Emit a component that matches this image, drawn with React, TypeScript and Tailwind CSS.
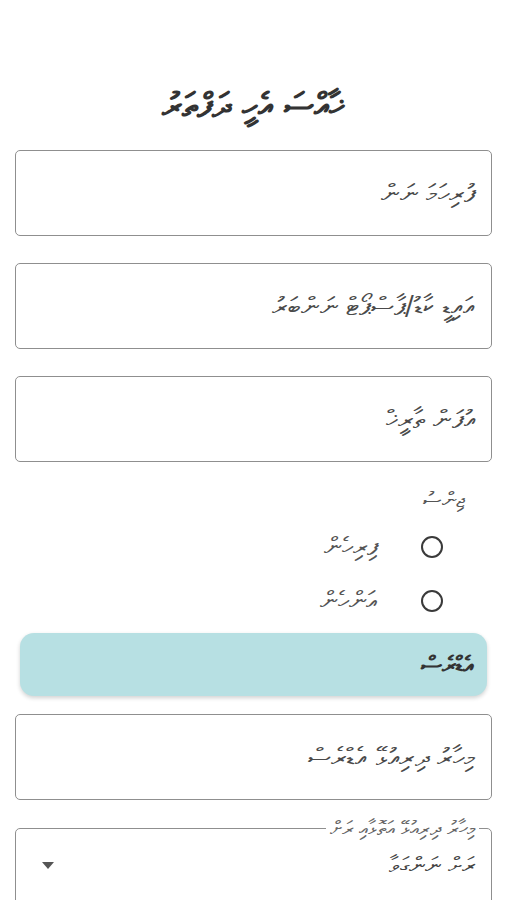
import React from 'react'

const font = { fontFamily: '"DejaVu Sans", "Noto Sans", sans-serif' }

function Field({ label }: { label: string }) {
  return (
    <div className="h-[86px] rounded-[5px] border border-[#8f8f8f] flex items-center px-4">
      <span className="text-[26px] leading-[32px] text-[#4a4a4a]">{label}</span>
    </div>
  )
}

function Radio({ label }: { label: string }) {
  return (
    <label className="flex items-center h-[54px]">
      <span className="mr-[21px] w-[22px] h-[22px] rounded-full border-2 border-[#3a3a3a]" />
      <span className="mr-[44px] text-[25px] leading-[30px] text-[#555]">{label}</span>
    </label>
  )
}

export default function App() {
  return (
    <div dir="rtl" style={font} className="w-[507px] min-h-[900px] bg-white px-[15px] overflow-hidden">
      <h1 className="mt-[85px] mb-[25px] h-[40px] leading-[40px] text-center text-[34px] font-bold text-[#333]">
        ޚާއްސަ އެހީ ދަފްތަރު
      </h1>

      <div className="flex flex-col gap-[27px]">
        <Field label="ފުރިހަމަ ނަން" />
        <Field label="އައިޑީ ކާޑު/ޕާސްޕޯޓް ނަންބަރު" />
        <Field label="އުފަން ތާރީޚް" />
      </div>

      <div className="pt-[23px] pr-[28px]">
        <div className="text-[21px] text-[#555] h-[30px] leading-[30px]">ޖިންސު</div>
        <div className="mt-[5px]">
          <Radio label="ފިރިހެން" />
          <Radio label="އަންހެން" />
        </div>
      </div>

      <div className="mx-[5px] mt-[5px] h-[63px] rounded-[14px] bg-[#b7e0e3] shadow-[0_2px_4px_rgba(0,0,0,0.18)] flex items-center px-[13px]">
        <span className="text-[24px] leading-[30px] font-bold text-[#333]">އެޑްރެސް</span>
      </div>

      <div className="mt-[18px]">
        <Field label="މިހާރު ދިރިއުޅޭ އެޑްރެސް" />
      </div>

      <fieldset className="mt-[18px] h-[100px] rounded-[5px] border border-[#8f8f8f] px-[12px]">
        <legend className="px-[4px] h-[20px] text-[20px] text-[#666] leading-[20px]">
          މިހާރު ދިރިއުޅޭ އަތޮޅާއި ރަށް
        </legend>
        <div className="flex items-center justify-between h-[30px] mt-[12px] pr-[4px] pl-[14px]">
          <span className="text-[23px] leading-[30px] text-[#444]">ރަށް ނަންގަވާ</span>
          <svg width="12" height="7" viewBox="0 0 12 7">
            <path d="M0 0 H12 L6 7 Z" fill="#555" />
          </svg>
        </div>
      </fieldset>
    </div>
  )
}
